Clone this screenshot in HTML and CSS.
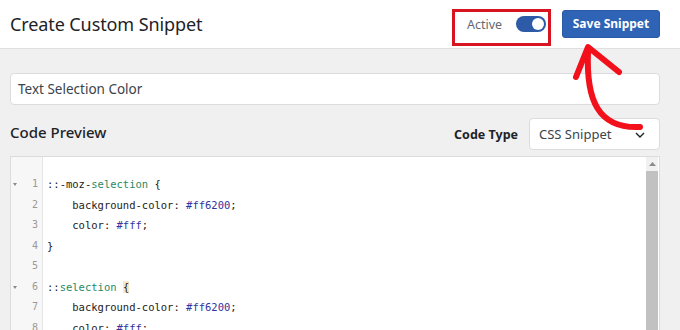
FILE: index.html
```html
<!DOCTYPE html>
<html>
<head>
<meta charset="utf-8">
<link rel="stylesheet" href="styles.css">
</head>
<body>
<div class="page">
  <header class="header">
    <h1 class="title">Create Custom Snippet</h1>
    <div class="active-box">
      <span class="active-label">Active</span>
      <span class="toggle"><span class="knob"></span></span>
    </div>
    <button class="save">Save Snippet</button>
  </header>
  <main class="main">
    <div class="name-input">Text Selection Color</div>
    <div class="row">
      <h2 class="preview-title">Code Preview</h2>
      <div class="type">
        <span class="type-label">Code Type</span>
        <div class="select">
          <span>CSS Snippet</span>
          <svg class="chev" width="10" height="6" viewBox="0 0 10 6"><path d="M1 1 L5 5 L9 1" fill="none" stroke="#1d2327" stroke-width="1.4"/></svg>
        </div>
      </div>
    </div>
    <div class="editor">
      <div class="gutter">
        <div class="gl"><span class="fold"></span>1</div>
        <div class="gl">2</div>
        <div class="gl">3</div>
        <div class="gl">4</div>
        <div class="gl">5</div>
        <div class="gl"><span class="fold"></span>6</div>
        <div class="gl">7</div>
        <div class="gl">8</div>
      </div>
      <div class="code">
        <div class="cl">::-moz-<span class="sel">selection</span> {</div>
        <div class="cl">    background-color: <span class="val">#ff6200</span>;</div>
        <div class="cl">    color: <span class="val">#fff</span>;</div>
        <div class="cl">}</div>
        <div class="cl"> </div>
        <div class="cl">::<span class="sel">selection</span> <span class="match">{</span></div>
        <div class="cl">    background-color: <span class="val">#ff6200</span>;</div>
        <div class="cl">    color: <span class="val">#fff</span>;</div>
      </div>
      <div class="scrollbar">
        <div class="sb-btn"><svg width="7" height="4" viewBox="0 0 7 4"><path d="M0 4 L3.5 0 L7 4 Z" fill="#8c8c8c"/></svg></div>
        <div class="sb-thumb"></div>
      </div>
    </div>
  </main>
  <svg class="arrow" width="680" height="330" viewBox="0 0 680 330">
    <path d="M588 52 C 586 100, 598 129, 640 127" fill="none" stroke="#f2101b" stroke-width="6" stroke-linecap="round"/>
    <path d="M576 77 L588 47 L619 72" fill="none" stroke="#f2101b" stroke-width="6" stroke-linecap="round" stroke-linejoin="round"/>
  </svg>
</div>
</body>
</html>
```

FILE: styles.css
```css
* { box-sizing: border-box; }
html, body { margin: 0; padding: 0; }
body {
  background: #f0f0f1;
  font-family: "Noto Sans", "Open Sans", sans-serif;
  color: #1d2327;
  overflow: hidden;
  width: 680px;
  height: 330px;
}
.page { position: relative; width: 680px; height: 330px; }
.header {
  display: flex;
  align-items: center;
  height: 49px;
  background: #fff;
  border-bottom: 1px solid #e0e0e2;
  padding: 0 20px 0 10px;
}
.title {
  margin: 0;
  font-size: 18px;
  font-weight: 400;
  flex: 1;
  color: #1d2327;
  letter-spacing: -0.1px;
}
.active-box {
  display: flex;
  align-items: center;
  height: 37px;
  width: 99px;
  border: 3px solid #d7141f;
  padding: 0 2px 6px 12px;
  margin-top: 6px;
  justify-content: space-between;
}
.active-label { font-size: 12.5px; color: #646970; }
.toggle {
  width: 30px; height: 16px;
  border-radius: 8px;
  background: #2d5ba8;
  position: relative;
  display: block;
}
.knob {
  position: absolute;
  right: 2px; top: 2px;
  width: 12px; height: 12px;
  border-radius: 50%;
  background: #fff;
}
.save {
  margin-left: 11px;
  width: 98px; height: 28px;
  background: #2f63b6;
  border: 1px solid #2a5aa6;
  border-radius: 3px;
  color: #fff;
  font-family: "Noto Sans", sans-serif;
  font-weight: 700;
  font-size: 12px;
  padding: 0;
  margin-top: -1px;
}
.main { padding: 24px 20px 0 10px; }
.name-input {
  height: 32px;
  background: #fff;
  border: 1px solid #dcdcde;
  border-radius: 4px;
  padding: 0 7px;
  display: flex;
  align-items: center;
  font-size: 13.5px;
  color: #3c434a;
}
.row {
  display: flex;
  justify-content: space-between;
  align-items: center;
  margin-top: 13px;
  height: 32px;
}
.preview-title { margin: 0; font-size: 15px; font-weight: 500; margin-top: -4px; }
.type { display: flex; align-items: center; gap: 11px; }
.type-label { font-size: 12.5px; font-weight: 700; }
.select {
  width: 131px; height: 32px;
  background: #fff;
  border: 1px solid #dcdcde;
  border-radius: 4px;
  display: flex; align-items: center; justify-content: space-between;
  padding: 0 14px 0 9px;
  font-size: 13px; color: #3c434a;
}
.chev { margin-top: 2px; }
.editor {
  margin-top: 6px;
  height: 200px;
  background: #fff;
  border: 1px solid #dcdcde;
  display: flex;
}
.gutter {
  width: 32px;
  background: #f7f7f7;
  border-right: 1px solid #e6e6e6;
  padding-top: 17px;
}
.gl {
  height: 20.5px; line-height: 20.5px;
  text-align: right;
  padding-right: 4px;
  font-family: "DejaVu Sans Mono", monospace;
  font-size: 10px;
  color: #999;
  position: relative;
}
.fold {
  position: absolute; left: 2px; top: 9px;
  width: 0; height: 0;
  border-left: 2.5px solid transparent;
  border-right: 2.5px solid transparent;
  border-top: 3px solid #888;
}
.code {
  flex: 1;
  padding: 17px 0 0 4px;
  font-family: "DejaVu Sans Mono", monospace;
  font-size: 10.5px;
  color: #222;
}
.cl { height: 20.5px; line-height: 20.5px; white-space: pre; }
.sel { color: #1f8a64; }
.val { color: #3232a0; }
.match { background: #f6e8c4; }
.scrollbar { width: 12px; margin-right: 1px; display: flex; flex-direction: column; }
.sb-btn {
  height: 14px; background: #f1f1f1;
  display: flex; align-items: center; justify-content: center;
}
.sb-thumb { flex: 1; background: #c1c1c1; }
.arrow { position: absolute; left: 0; top: 0; pointer-events: none; }
```
